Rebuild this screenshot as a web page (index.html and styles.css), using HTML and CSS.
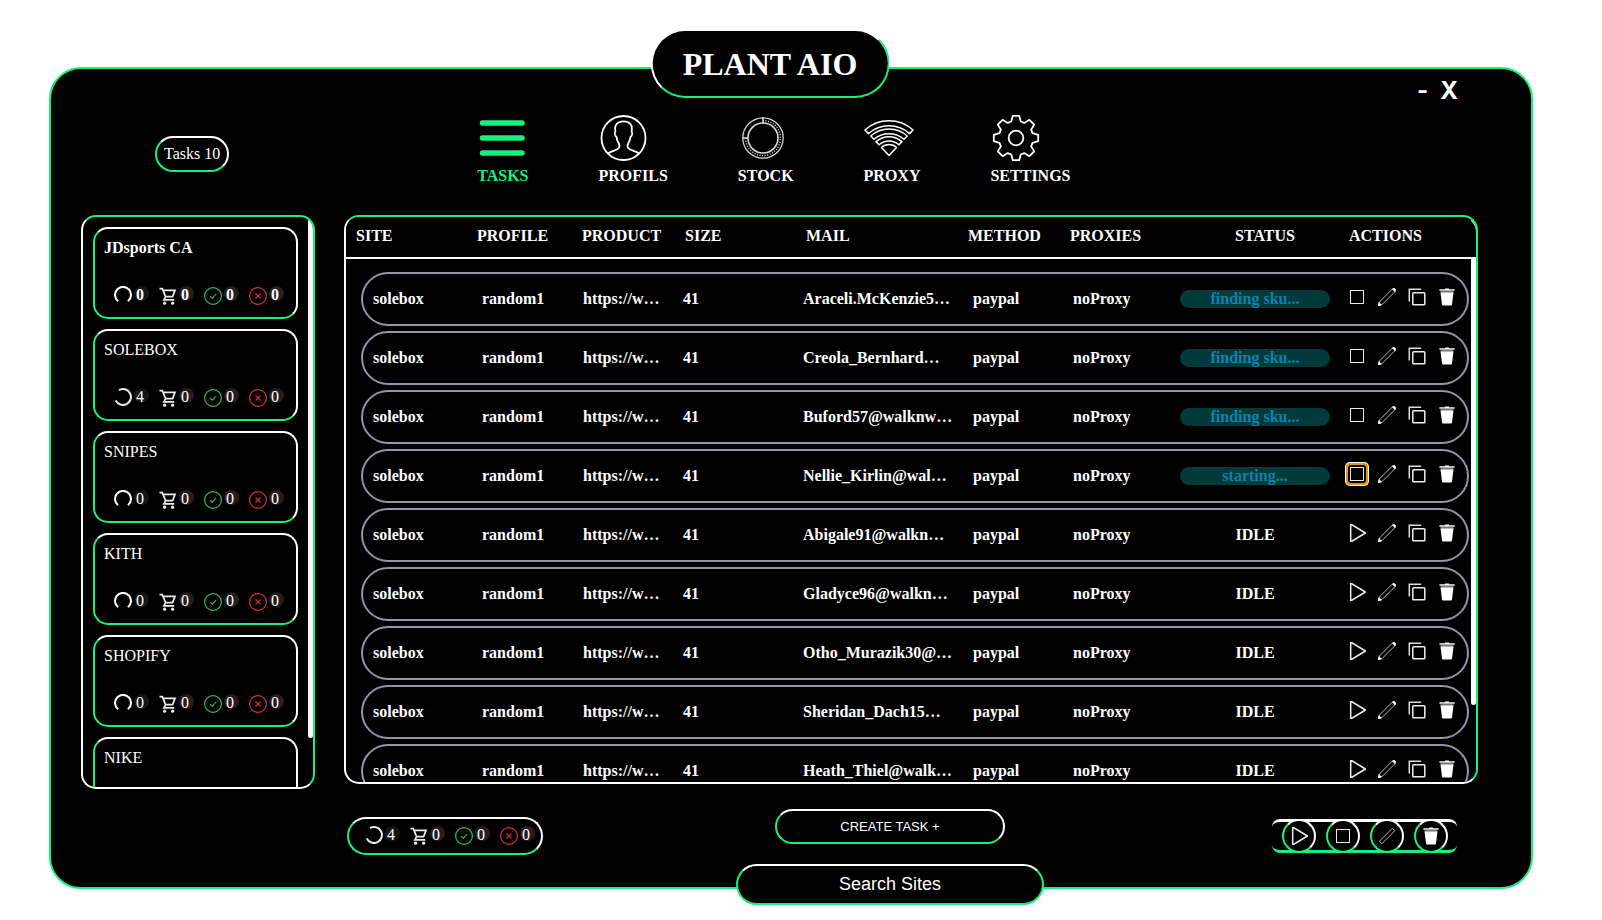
FILE: index.html
```html
<!DOCTYPE html>
<html lang="en">
<head>
<meta charset="utf-8">
<title>Plant AIO</title>
<link rel="stylesheet" href="styles.css">
</head>
<body>
<svg class="sprite" aria-hidden="true">
  <symbol id="i-spin" viewBox="0 0 18 18"><path d="M4.1 15.2A8 8 0 1 1 13.9 15.2" fill="none" stroke="#fff" stroke-width="2"/></symbol>
  <symbol id="i-spin-run" viewBox="0 0 18 18"><path d="M4.9 2.1A8 8 0 1 1 1.7 12.4" fill="none" stroke="#e8e8e8" stroke-width="2"/></symbol>
  <symbol id="i-cart" viewBox="0 0 18 18"><path d="M.5 1.6H3.3L6.6 9.6H13.6L16 3.4H4.2M6.6 9.6L4.9 12.9H15.2" fill="none" stroke="#eee" stroke-width="1.7"/><circle cx="5.6" cy="16.2" r="1.6" fill="#eee"/><circle cx="13.6" cy="16.2" r="1.6" fill="#eee"/></symbol>
  <symbol id="i-ok" viewBox="0 0 18 18"><circle cx="9" cy="9" r="8.4" fill="none" stroke="#1fc46c" stroke-width="1.2"/><path d="M6 9.2L8.3 11.2L12.2 7" fill="none" stroke="#1fc46c" stroke-width="1.1"/></symbol>
  <symbol id="i-fail" viewBox="0 0 18 18"><circle cx="9" cy="9" r="8.4" fill="none" stroke="#e0293f" stroke-width="1.2"/><path d="M6.5 6.5L11.5 11.5M11.5 6.5L6.5 11.5" fill="none" stroke="#e0293f" stroke-width="1.1"/></symbol>
  <symbol id="i-stop" viewBox="0 0 18 18"><rect x="2.5" y="2.5" width="13" height="13" fill="none" stroke="#e8e8e8"/></symbol>
  <symbol id="i-play" viewBox="0 0 18 18"><path d="M2.7 0V18L17.4 9Z" fill="none" stroke="#eee" stroke-width="1.5" stroke-linejoin="round"/></symbol>
  <symbol id="i-edit" viewBox="0 0 18 18"><path d="M.3 17.7L1.4 14L14.4 1A1.8 1.8 0 0 1 17 3.6L4 16.6Z" fill="none" stroke="#bbb" stroke-width="1"/><path d="M14.3 1.1A1.8 1.8 0 0 1 16.9 3.7ZM.1 17.9L1 14.6L3.4 17Z" fill="#fff" stroke="#fff" stroke-width=".6"/></symbol>
  <symbol id="i-copy" viewBox="0 0 18 18"><rect x="4.8" y="4.8" width="12" height="12" rx=".8" fill="none" stroke="#eee" stroke-width="1.5"/><path d="M13.2 1.3H1.3V13.6" fill="none" stroke="#ddd" stroke-width="1.5"/></symbol>
  <symbol id="i-trash" viewBox="0 0 18 18"><path d="M7 .5H11V1.3H16.6V2.8H1.4V1.3H7Z" fill="#fff"/><path d="M2.6 2.8H15.4V5H2.6Z" fill="#777"/><path d="M2.5 4.6H15.5L14 16.4Q13.9 17.4 12.9 17.4H5.1Q4.1 17.4 4 16.4Z" fill="#fff"/></symbol>
  <symbol id="i-editbar" viewBox="0 0 18 18"><path d="M1.4 14.2L14.4 1.2L16.9 3.7L3.9 16.7Z" fill="none" stroke="#bbb" stroke-width="1"/></symbol>
</svg>

<main class="app">
  <h1 class="brand">PLANT AIO</h1>

  <header class="top">
    <div class="count">Tasks 10</div>
    <nav class="nav">
      <a class="nav-item active" href="#tasks"><svg viewBox="0 0 50 50"><path d="M5.500 10H45M5.500 25H45M5.500 40H45" stroke="#17f07f" stroke-width="5.500" stroke-linecap="round"/></svg>TASKS</a>
      <a class="nav-item" href="#profils"><svg viewBox="0 0 50 50"><g fill="none" stroke="#fff" stroke-width="1.8"><circle cx="24.500" cy="25" r="22"/><path d="M9 40.500C11.500 38 18 37.500 19.800 35C20.800 33.500 20.200 31 19.500 29.800C18.100 27.800 17.800 26 17.500 24C15.700 22.500 15.500 20 16.400 18.600C15.100 12 18.300 8.300 24.500 8.300C30.700 8.300 33.900 12 32.600 18.600C33.500 20 33.300 22.500 31.500 24C31.200 26 30.900 27.800 29.500 29.800C28.800 31 28.200 33.500 29.200 35C31 37.500 37.500 38 40 40.500"/></g></svg>PROFILS</a>
      <a class="nav-item" href="#stock"><svg viewBox="0 0 50 50"><g fill="none" stroke="#ddd"><circle cx="25" cy="25" r="20.2" stroke-width="1.2"/><circle cx="25" cy="25" r="15" stroke-width="1.5"/><path d="M25 7.5A17.5 17.5 0 1 1 7.5 25" stroke-width="1.5" stroke-dasharray="1 1.6"/><path d="M25 4.5V10M4.5 25H10" stroke-width="1.5"/></g></svg>STOCK</a>
      <a class="nav-item" href="#proxy"><svg viewBox="0 0 50 50"><g fill="none" stroke="#fff" stroke-width="1.5" stroke-linejoin="round"><path d="M.9 17A36 36 0 0 1 49.1 17L45.5 20.6A31 31 0 0 0 4.5 20.6Z"/><path d="M6.7 23A27.5 27.5 0 0 1 43.3 23L40 26.2A23 23 0 0 0 10 26.2Z"/><path d="M12 28.6A19.5 19.5 0 0 1 38 28.6L34.9 31.7A15 15 0 0 0 15.1 31.7Z"/><path d="M17.5 34.5A11 11 0 0 1 32.5 34.5L25 42.5Z"/></g></svg>PROXY</a>
      <a class="nav-item" href="#settings"><svg viewBox="-26 -25 50 50"><g fill="none" stroke="#fff" stroke-width="1.8" stroke-linejoin="round"><circle r="7.3"/><path d="M-3.2-22.2H3.2L4.8-16.5L8.3-15.1L13.4-18.2L18.2-13.4L15.1-8.3L16.5-4.8L22.2-3.2V3.2L16.5 4.8L15.1 8.3L18.2 13.4L13.4 18.2L8.3 15.1L4.8 16.5L3.2 22.2H-3.2L-4.8 16.5L-8.3 15.1L-13.4 18.2L-18.2 13.4L-15.1 8.3L-16.5 4.8L-22.2 3.2V-3.2L-16.5-4.8L-15.1-8.3L-18.2-13.4L-13.4-18.2L-8.3-15.1L-4.8-16.5Z"/></g></svg>SETTINGS</a>
    </nav>
    <div class="controls">
      <button type="button" aria-label="Minimize">-</button>
      <button type="button" aria-label="Close">X</button>
    </div>
  </header>

  <div class="content">
    <aside class="panel sites">
      <ul class="site-list">
        <li class="card selected"><h2 class="site">JDsports CA</h2><div class="stats"><span class="stat"><svg><use href="#i-spin"/></svg><b class="dim">0</b></span><span class="stat"><svg><use href="#i-cart"/></svg><b>0</b></span><span class="stat"><svg><use href="#i-ok"/></svg><b>0</b></span><span class="stat"><svg><use href="#i-fail"/></svg><b>0</b></span></div></li>
        <li class="card"><h2 class="site">SOLEBOX</h2><div class="stats"><span class="stat"><svg><use href="#i-spin-run"/></svg><b class="dim">4</b></span><span class="stat"><svg><use href="#i-cart"/></svg><b>0</b></span><span class="stat"><svg><use href="#i-ok"/></svg><b>0</b></span><span class="stat"><svg><use href="#i-fail"/></svg><b>0</b></span></div></li>
        <li class="card"><h2 class="site">SNIPES</h2><div class="stats"><span class="stat"><svg><use href="#i-spin"/></svg><b class="dim">0</b></span><span class="stat"><svg><use href="#i-cart"/></svg><b>0</b></span><span class="stat"><svg><use href="#i-ok"/></svg><b>0</b></span><span class="stat"><svg><use href="#i-fail"/></svg><b>0</b></span></div></li>
        <li class="card"><h2 class="site">KITH</h2><div class="stats"><span class="stat"><svg><use href="#i-spin"/></svg><b class="dim">0</b></span><span class="stat"><svg><use href="#i-cart"/></svg><b>0</b></span><span class="stat"><svg><use href="#i-ok"/></svg><b>0</b></span><span class="stat"><svg><use href="#i-fail"/></svg><b>0</b></span></div></li>
        <li class="card"><h2 class="site">SHOPIFY</h2><div class="stats"><span class="stat"><svg><use href="#i-spin"/></svg><b class="dim">0</b></span><span class="stat"><svg><use href="#i-cart"/></svg><b>0</b></span><span class="stat"><svg><use href="#i-ok"/></svg><b>0</b></span><span class="stat"><svg><use href="#i-fail"/></svg><b>0</b></span></div></li>
        <li class="card"><h2 class="site">NIKE</h2></li>
      </ul>
      <div class="thumb"></div>
    </aside>

    <section class="work">
      <div class="panel tasks">
        <div class="thumb"></div>
        <table class="grid">
          <thead>
            <tr><th>SITE</th><th>PROFILE</th><th>PRODUCT</th><th>SIZE</th><th>MAIL</th><th>METHOD</th><th>PROXIES</th><th>STATUS</th><th>ACTIONS</th></tr>
          </thead>
          <tbody>
            <tr><td>solebox</td><td>random1</td><td>https://w…</td><td>41</td><td>Araceli.McKenzie5…</td><td>paypal</td><td>noProxy</td><td><span class="status busy">finding sku...</span></td><td class="acts"><button type="button" aria-label="Stop"><svg><use href="#i-stop"/></svg></button><button type="button" aria-label="Edit"><svg><use href="#i-edit"/></svg></button><button type="button" aria-label="Copy"><svg><use href="#i-copy"/></svg></button><button type="button" aria-label="Delete"><svg><use href="#i-trash"/></svg></button></td></tr>
            <tr><td>solebox</td><td>random1</td><td>https://w…</td><td>41</td><td>Creola_Bernhard…</td><td>paypal</td><td>noProxy</td><td><span class="status busy">finding sku...</span></td><td class="acts"><button type="button" aria-label="Stop"><svg><use href="#i-stop"/></svg></button><button type="button" aria-label="Edit"><svg><use href="#i-edit"/></svg></button><button type="button" aria-label="Copy"><svg><use href="#i-copy"/></svg></button><button type="button" aria-label="Delete"><svg><use href="#i-trash"/></svg></button></td></tr>
            <tr><td>solebox</td><td>random1</td><td>https://w…</td><td>41</td><td>Buford57@walknw…</td><td>paypal</td><td>noProxy</td><td><span class="status busy">finding sku...</span></td><td class="acts"><button type="button" aria-label="Stop"><svg><use href="#i-stop"/></svg></button><button type="button" aria-label="Edit"><svg><use href="#i-edit"/></svg></button><button type="button" aria-label="Copy"><svg><use href="#i-copy"/></svg></button><button type="button" aria-label="Delete"><svg><use href="#i-trash"/></svg></button></td></tr>
            <tr><td>solebox</td><td>random1</td><td>https://w…</td><td>41</td><td>Nellie_Kirlin@wal…</td><td>paypal</td><td>noProxy</td><td><span class="status busy">starting...</span></td><td class="acts"><button type="button" class="focused" aria-label="Stop"><svg><use href="#i-stop"/></svg></button><button type="button" aria-label="Edit"><svg><use href="#i-edit"/></svg></button><button type="button" aria-label="Copy"><svg><use href="#i-copy"/></svg></button><button type="button" aria-label="Delete"><svg><use href="#i-trash"/></svg></button></td></tr>
            <tr><td>solebox</td><td>random1</td><td>https://w…</td><td>41</td><td>Abigale91@walkn…</td><td>paypal</td><td>noProxy</td><td><span class="status">IDLE</span></td><td class="acts"><button type="button" aria-label="Start"><svg><use href="#i-play"/></svg></button><button type="button" aria-label="Edit"><svg><use href="#i-edit"/></svg></button><button type="button" aria-label="Copy"><svg><use href="#i-copy"/></svg></button><button type="button" aria-label="Delete"><svg><use href="#i-trash"/></svg></button></td></tr>
            <tr><td>solebox</td><td>random1</td><td>https://w…</td><td>41</td><td>Gladyce96@walkn…</td><td>paypal</td><td>noProxy</td><td><span class="status">IDLE</span></td><td class="acts"><button type="button" aria-label="Start"><svg><use href="#i-play"/></svg></button><button type="button" aria-label="Edit"><svg><use href="#i-edit"/></svg></button><button type="button" aria-label="Copy"><svg><use href="#i-copy"/></svg></button><button type="button" aria-label="Delete"><svg><use href="#i-trash"/></svg></button></td></tr>
            <tr><td>solebox</td><td>random1</td><td>https://w…</td><td>41</td><td>Otho_Murazik30@…</td><td>paypal</td><td>noProxy</td><td><span class="status">IDLE</span></td><td class="acts"><button type="button" aria-label="Start"><svg><use href="#i-play"/></svg></button><button type="button" aria-label="Edit"><svg><use href="#i-edit"/></svg></button><button type="button" aria-label="Copy"><svg><use href="#i-copy"/></svg></button><button type="button" aria-label="Delete"><svg><use href="#i-trash"/></svg></button></td></tr>
            <tr><td>solebox</td><td>random1</td><td>https://w…</td><td>41</td><td>Sheridan_Dach15…</td><td>paypal</td><td>noProxy</td><td><span class="status">IDLE</span></td><td class="acts"><button type="button" aria-label="Start"><svg><use href="#i-play"/></svg></button><button type="button" aria-label="Edit"><svg><use href="#i-edit"/></svg></button><button type="button" aria-label="Copy"><svg><use href="#i-copy"/></svg></button><button type="button" aria-label="Delete"><svg><use href="#i-trash"/></svg></button></td></tr>
            <tr><td>solebox</td><td>random1</td><td>https://w…</td><td>41</td><td>Heath_Thiel@walk…</td><td>paypal</td><td>noProxy</td><td><span class="status">IDLE</span></td><td class="acts"><button type="button" aria-label="Start"><svg><use href="#i-play"/></svg></button><button type="button" aria-label="Edit"><svg><use href="#i-edit"/></svg></button><button type="button" aria-label="Copy"><svg><use href="#i-copy"/></svg></button><button type="button" aria-label="Delete"><svg><use href="#i-trash"/></svg></button></td></tr>
          </tbody>
        </table>
      </div>

      <footer class="foot">
        <div class="totals"><div class="stats"><span class="stat"><svg><use href="#i-spin-run"/></svg><b class="dim">4</b></span><span class="stat"><svg><use href="#i-cart"/></svg><b>0</b></span><span class="stat"><svg><use href="#i-ok"/></svg><b>0</b></span><span class="stat"><svg><use href="#i-fail"/></svg><b>0</b></span></div></div>
        <button type="button" class="create">CREATE TASK +</button>
        <div class="bulk">
          <button type="button" aria-label="Start all"><svg><use href="#i-play"/></svg></button>
          <button type="button" aria-label="Stop all"><svg><use href="#i-stop"/></svg></button>
          <button type="button" aria-label="Edit all"><svg><use href="#i-editbar"/></svg></button>
          <button type="button" aria-label="Delete all"><svg><use href="#i-trash"/></svg></button>
        </div>
      </footer>
    </section>
  </div>

  <button type="button" class="search">Search Sites</button>
</main>
</body>
</html>
```

FILE: styles.css
```css
:root {
  --green: #17f07f;
  --line: #9195a5;
}
* { box-sizing: border-box; }
body {
  margin: 0;
  height: 100vh;
  padding: 67px 69px 31px 49px;
  background: #fff;
  color: #fff;
  font: 16px/18px "Liberation Serif", "Times New Roman", serif;
}
button {
  margin: 0;
  padding: 0;
  border: 0;
  background: none;
  color: inherit;
  font: inherit;
  cursor: pointer;
}
svg { display: block; }
.sprite { position: absolute; width: 0; height: 0; }

.app {
  position: relative;
  display: flex;
  flex-direction: column;
  height: 100%;
  background: #000;
  border: 2px solid var(--green);
  border-radius: 32px;
}
.brand {
  position: absolute;
  top: -40px;
  left: calc(50% - 21px);
  transform: translateX(-50%);
  margin: 0;
  padding: 2px 30px 0;
  background: #000;
  border: 2px solid;
  border-color: #fff var(--green) var(--green) #fff;
  border-radius: 35px;
  font-size: 32px;
  line-height: 63px;
  white-space: nowrap;
}

.top {
  display: flex;
  align-items: flex-start;
  height: 146px;
  padding: 10px 73px 0 104px;
}
.count {
  margin-top: 57px;
  padding: 7px;
  border: 2px solid;
  border-color: #fff #fff var(--green) var(--green);
  border-radius: 18px;
  white-space: nowrap;
}
.nav {
  display: flex;
  gap: 70px;
  margin: 34px 0 0 248px;
  font-weight: bold;
}
.nav-item { color: #fff; text-decoration: none; }
.nav-item.active { color: var(--green); }
.nav-item svg { width: 50px; height: 50px; margin-bottom: 4px; }
.controls {
  display: flex;
  gap: 12px;
  margin-left: auto;
  font: bold 24px/24px Inter, sans-serif;
}

.content {
  flex: 1;
  min-height: 0;
  display: grid;
  grid-template-columns: 234px minmax(0, 1fr);
  gap: 29px;
  padding: 0 53px 0 30px;
}
.panel {
  position: relative;
  overflow: hidden;
  border: 2px solid;
  border-color: var(--green) var(--green) #fff #fff;
  border-radius: 15px;
}
.thumb {
  position: absolute;
  top: 2px;
  right: 0;
  width: 5px;
  height: 91%;
  background: #fff;
  border-radius: 3px;
}
.tasks .thumb { height: 86%; }

.sites { margin-bottom: 98px; }
.site-list {
  display: grid;
  gap: 10px;
  margin: 0;
  padding: 10px 15px 10px 10px;
  list-style: none;
}
.card {
  height: 92px;
  padding: 10px 9px;
  border: 2px solid;
  border-color: #fff #fff var(--green) var(--green);
  border-radius: 15px;
}
.site { margin: 0 0 28px; font-size: 16px; font-weight: normal; }
.selected .site { font-weight: bold; }
.stats { display: flex; padding-left: 10px; }
.stat { display: flex; flex: none; width: 45px; }
.stat:last-child { width: auto; }
.stat svg { width: 18px; height: 18px; margin-top: 2px; }
.stat:first-child svg { margin-top: 1px; }
.stat b {
  height: 15px;
  width: 15px;
  margin: 1px 0 0 2px;
  padding-left: 2px;
  border-radius: 50%;
  background: #261e1e;
  font-weight: normal;
  line-height: 18px;
}
.stat b.dim { background: #161616; }
.selected .stat b { font-weight: bold; }

.work { display: flex; flex-direction: column; min-width: 0; min-height: 0; }
.tasks { flex: 1; min-height: 0; }
.grid { display: block; }
thead, tbody { display: block; }
tr { display: grid; align-items: center; }
th, td { padding: 0; text-align: left; font-weight: bold; white-space: nowrap; }
thead {
  position: relative;
  background: #000;
  border-bottom: 2px solid #fff;
  border-radius: 0 15px 0 0;
}
thead tr {
  height: 40px;
  padding: 0 0 2px 10px;
  grid-template-columns: 121fr 105fr 103fr 121fr 162fr 102fr 165fr 114fr 127fr;
}
tbody { display: grid; gap: 5px; padding: 13px 7px 13px 15px; }
tbody tr {
  height: 54px;
  padding-left: 10px;
  border: 2px solid var(--line);
  border-radius: 27px;
  grid-template-columns: 109fr 101fr 100fr 120fr 170fr 100fr 107fr 168fr 119fr;
}
.status { display: block; width: 150px; border-radius: 9px; text-align: center; }
.busy { background: #003a3a; color: #0f82ad; }
.acts { display: flex; gap: 12px; padding-bottom: 4px; }
.acts svg, .bulk svg { width: 18px; height: 18px; overflow: visible; }
.focused {
  border-radius: 2px;
  box-shadow: 0 0 0 2px #e59700, 0 0 0 3px #fff;
}

.foot {
  display: grid;
  grid-template-columns: 196px 232fr 230px 267fr 185px;
  align-items: start;
  height: 103px;
  padding: 25px 21px 0 3px;
}
.totals {
  height: 38px;
  margin-top: 8px;
  padding: 6px;
  border: 2px solid;
  border-color: #fff #fff var(--green) var(--green);
  border-radius: 19px;
}
.create {
  grid-column: 3;
  height: 35px;
  border: 2px solid;
  border-color: #fff #fff var(--green) var(--green);
  border-radius: 18px;
  font: 13px "Liberation Sans", Arial, sans-serif;
}
.bulk {
  grid-column: 5;
  display: flex;
  gap: 10px;
  height: 34px;
  margin-top: 10px;
  padding: 0 10px;
  border-top: 3px solid #fff;
  border-bottom: 3px solid var(--green);
  border-radius: 8px;
}
.bulk button {
  display: grid;
  place-items: center;
  flex: none;
  width: 34px;
  height: 34px;
  margin-top: -3px;
  background: #000;
  border: 2px solid;
  border-color: #fff #fff var(--green) var(--green);
  border-radius: 50%;
}

.search {
  position: absolute;
  bottom: -18px;
  left: calc(50% + 99px);
  transform: translateX(-50%);
  width: 308px;
  height: 41px;
  background: #000;
  border: 2px solid;
  border-color: #fff var(--green) var(--green);
  border-radius: 21px;
  font: 18px "Liberation Sans", Arial, sans-serif;
}
.site-list { grid-template-columns: 205px; }
```
